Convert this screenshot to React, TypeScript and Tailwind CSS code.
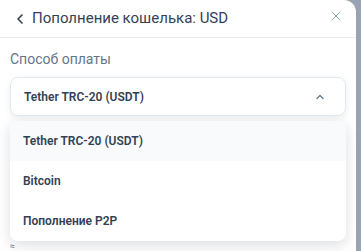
import { ChevronLeft, ChevronUp, X } from "lucide-react";

const options = ["Tether TRC-20 (USDT)", "Bitcoin", "Пополнение P2P"];

export default function App() {
  return (
    <div className="flex h-[251px] w-[361px] overflow-hidden bg-[#9aa3b1] font-['Roboto',sans-serif]">
      <div className="flex h-full w-[356px] flex-col rounded-tr-xl bg-white">
        {/* Header */}
        <div className="flex h-10 items-center border-b border-[#e8ecf1] pl-3 pr-[12px]">
          <ChevronLeft size={16} strokeWidth={2.5} className="text-[#334155]" />
          <span className="ml-[4px] text-[15px] text-[#334155]">Пополнение кошелька: USD</span>
          <X size={16} strokeWidth={1.5} className="ml-auto -mt-[5px] text-[#94a3b8]" />
        </div>

        <div className="flex flex-col px-[10px] pt-[11px]">
          <span className="text-[14px] text-[#64748b]">Способ оплаты</span>

          {/* Select */}
          <div className="mt-[7px] flex h-[39px] items-center rounded-lg border border-[#e2e8f0] px-[13px] shadow-[0_2px_6px_rgba(15,23,42,0.08)]">
            <span className="text-[12px] font-semibold text-[#334155]">Tether TRC-20 (USDT)</span>
            <ChevronUp size={12} strokeWidth={2.5} className="ml-auto mr-[6px] text-[#64748b]" />
          </div>

          {/* Dropdown */}
          <div className="mt-[5px] flex flex-col overflow-hidden rounded-lg bg-white shadow-[0_4px_14px_rgba(15,23,42,0.14)]">
            {options.map((o, i) => (
              <div
                key={o}
                className={`flex h-10 items-center px-[13px] text-[12px] font-semibold text-[#334155] ${i === 0 ? "bg-[#f8fafc]" : ""}`}
              >
                {o}
              </div>
            ))}
          </div>

          <span className="mt-[1px] text-[9px] leading-none text-[#64748b]">≈</span>
        </div>
      </div>
    </div>
  );
}
